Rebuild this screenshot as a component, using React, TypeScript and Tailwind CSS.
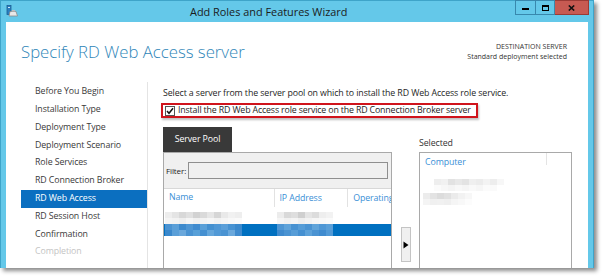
import React from "react";

const steps = [
  "Before You Begin",
  "Installation Type",
  "Deployment Type",
  "Deployment Scenario",
  "Role Services",
  "RD Connection Broker",
  "RD Web Access",
  "RD Session Host",
  "Confirmation",
  "Completion",
];

// pixelated (blurred-out) text, drawn as a grid of small cells
const Mosaic: React.FC<{ rows: string[][] }> = ({ rows }) => (
  <div className="flex flex-col">
    {rows.map((row, i) => (
      <div key={i} className="flex">
        {row.map((c, j) => (
          <div key={j} className="h-[6px] w-[7px]" style={{ backgroundColor: c }} />
        ))}
      </div>
    ))}
  </div>
);

const grayA = [
  ["#ededed", "#e4e4e4", "#d8d8d8", "#e0e0e0", "#d2d2d2", "#dadada", "#e6e6e6", "#d6d6d6", "#e9e9e9", "#f1f1f1", "#eeeeee"],
  ["#f4f4f4", "#f2f2f2", "#eeeeee", "#f5f5f5", "#f0f0f0", "#f3f3f3", "#f6f6f6", "#f2f2f2", "#f5f5f5", "#f8f8f8", "#fafafa"],
];
const grayB = [
  ["#ececec", "#d9d9d9", "#dedede", "#cfcfcf", "#e4e4e4", "#dcdcdc", "#eeeeee", "#f2f2f2"],
  ["#f5f5f5", "#f1f1f1", "#f4f4f4", "#eeeeee", "#f2f2f2", "#f6f6f6", "#f8f8f8", "#fafafa"],
];
const blueA = [
  ["#4a93d2", "#5a9fd8", "#3d8acd", "#4e96d4", "#3f8bcf", "#5aa0d8", "#4490d0", "#4f97d5", "#5b9fd9", "#4792d2", "#3a88cc"],
  ["#3a88cc", "#5a9fd8", "#6aa8dc", "#4a93d2", "#58a0d8", "#4590d1", "#64a6db", "#5199d6", "#4a93d2", "#6aa8dc", "#3f8bcf"],
];
const blueB = [
  ["#4e96d4", "#5fa3da", "#4791d1", "#559cd7", "#4a93d2", "#60a4da", "#4f97d5", "#5a9fd8"],
  ["#3e8ace", "#4a93d2", "#579dd7", "#4590d1", "#5ca1d9", "#4a93d2", "#3f8bcf", "#5199d6"],
];
const selA = [
  ["#ffffff", "#eeeeee", "#f1f1f1", "#e2e2e2", "#e8e8e8", "#e3e3e3", "#efefef", "#ececec", "#f3f3f3", "#ededed", "#f7f7f7"],
  ["#ffffff", "#fbfbfb", "#f7f7f7", "#f4f4f4", "#f8f8f8", "#f5f5f5", "#f9f9f9", "#f6f6f6", "#fbfbfb", "#fafafa", "#ffffff"],
];
const selB = [
  ["#ececec", "#e3e3e3", "#dcdcdc", "#e1e1e1", "#ebebeb", "#f2f2f2", "#f7f7f7"],
  ["#f4f4f4", "#f0f0f0", "#f1f1f1", "#efefef", "#f5f5f5", "#f8f8f8", "#fcfcfc"],
];

export default function App() {
  return (
    <div className="h-[278px] w-[605px] overflow-hidden bg-white font-['Open_Sans',sans-serif] text-[#1e1e1e]">
      <div className="flex h-[268px] w-[594px] flex-col border border-b-0 border-[#3ea4c9] bg-[#64c8e9] shadow-[3px_3px_4px_rgba(0,0,0,0.45)]">
        {/* title bar */}
        <div className="flex h-[21px] items-start">
          <svg className="ml-[5px] mt-[4px]" width="12" height="12" viewBox="0 0 12 12">
            <rect x="1" y="0.5" width="4" height="9" fill="#2a7fc0" stroke="#1c5f95" strokeWidth="0.8" />
            <rect x="2" y="2" width="2" height="1" fill="#cfe8f8" />
            <path d="M4 6.5 L10 6.5 L11.5 11 L3 11 Z" fill="#e8e8e8" stroke="#8a8a8a" strokeWidth="0.8" />
            <path d="M6 5 L9 5 L9.5 6.5 L5.5 6.5 Z" fill="#bdbdbd" />
          </svg>
          <span className="ml-[172px] mt-[4px] text-[10.9px] leading-[14px] text-[#1b1b1b]">
            Add Roles and Features Wizard
          </span>
          <div className="ml-auto mr-[4px] mt-[-1px] flex h-[15px]">
            <div className="flex w-[21px] items-center justify-center border border-[#3888ad] bg-[#64c8e9]">
              <div className="mt-[3px] h-[2px] w-[7px] bg-black" />
            </div>
            <div className="flex w-[19px] items-center justify-center border border-l-0 border-[#3888ad] bg-[#64c8e9]">
              <div className="h-[6px] w-[7px] border-[1.5px] border-t-[2.5px] border-black" />
            </div>
            <div className="flex w-[34px] items-center justify-center border border-l-0 border-[#9a3a35] bg-[#c75a52]">
              <svg width="7" height="6" viewBox="0 0 7 6">
                <path d="M0.8 0.5 L6.2 5.5 M6.2 0.5 L0.8 5.5" stroke="#111111" strokeWidth="1.6" />
              </svg>
            </div>
          </div>
        </div>

        {/* client area */}
        <div className="mx-[5px] flex flex-1 flex-col bg-white">
          {/* header */}
          <div className="flex h-[60px] items-start justify-between">
            <h1 className="pl-[15px] pt-[18px] text-[16.75px] font-light leading-[24px] text-[#2f86b8]">
              Specify RD Web Access server
            </h1>
            <div className="pr-[21px] pt-[20px] text-right text-[7px] leading-[9.5px] text-[#333333]">
              <div>DESTINATION SERVER</div>
              <div>Standard deployment selected</div>
            </div>
          </div>

          {/* body */}
          <div className="flex flex-1 text-[8.8px] tracking-[-0.1px]">
            <ul className="w-[142px] border-r border-[#e4e4e4] pt-[1px]">
              {steps.map((s) => (
                <li
                  key={s}
                  className={
                    s === "RD Web Access"
                      ? "ml-[15px] flex h-[17.8px] items-center bg-[#0b6fc0] pl-[14px] text-white"
                      : s === "Completion"
                      ? "ml-[15px] flex h-[17.8px] items-center pl-[14px] text-[#c4c4c4]"
                      : "ml-[15px] flex h-[17.8px] items-center pl-[14px] text-[#3a3a3a]"
                  }
                >
                  {s}
                </li>
              ))}
            </ul>

            <div className="flex flex-1 flex-col pl-[15px]">
              <p className="pt-[5px] leading-[12px]">
                Select a server from the server pool on which to install the RD Web Access role service.
              </p>
              <div className="ml-[-2px] mt-[4px] flex h-[15px] w-[317px] items-center gap-[3px] border-2 border-[#d0141c] pl-[2px] shadow-[1px_2px_2px_rgba(0,0,0,0.25)]">
                <div className="flex h-[10px] w-[10px] items-center justify-center border border-[#555555] bg-white">
                  <svg width="8" height="8" viewBox="0 0 8 8">
                    <path d="M1 4 L3 6.3 L7 1.2" fill="none" stroke="#111111" strokeWidth="1.5" />
                  </svg>
                </div>
                <span className="whitespace-nowrap leading-[11px] tracking-[-0.15px]">
                  Install the RD Web Access role service on the RD Connection Broker server
                </span>
              </div>

              <div className="mt-[9px] flex flex-1">
                {/* server pool */}
                <div className="flex w-[229px] flex-col">
                  <div className="flex h-[25px] w-[69px] items-center justify-center bg-[#393939] text-white">
                    Server Pool
                  </div>
                  <div className="flex flex-1 flex-col border border-b-0 border-[#a9a9a9]">
                    <div className="flex h-[36px] items-center gap-[2px] border-b border-[#d8d8d8] bg-[#f0f0f0] pl-[2px] pr-[3px]">
                      <span className="text-[8px]">Filter:</span>
                      <div className="h-[17px] flex-1 border border-[#8f8f8f] bg-[#f0f0f0]" />
                    </div>
                    <div className="flex h-[18px] items-center text-[#3a8fd6]">
                      <div className="w-[110px] pl-[5px]">Name</div>
                      <div className="h-full w-[74px] border-l border-[#e2e2e2] pl-[5px] leading-[18px]">IP Address</div>
                      <div className="h-full w-[44px] overflow-hidden whitespace-nowrap border-l border-[#e2e2e2] pl-[5px] leading-[18px]">
                        Operating
                      </div>
                    </div>
                    <div className="mt-[5px] flex h-[12px] overflow-hidden">
                      <div className="ml-[1px] w-[112px]">
                        <Mosaic rows={grayA} />
                      </div>
                      <div className="w-[60px]">
                        <Mosaic rows={grayB} />
                      </div>
                    </div>
                    <div className="flex h-[12px] overflow-hidden bg-[#0070c0]">
                      <div className="ml-[1px] w-[112px]">
                        <Mosaic rows={blueA} />
                      </div>
                      <div className="w-[60px]">
                        <Mosaic rows={blueB} />
                      </div>
                    </div>
                  </div>
                </div>

                {/* add arrow */}
                <div className="ml-[9px] mt-[100px] flex h-[35px] w-[10px] items-center justify-center border border-[#c4c4c4] bg-[#f0f0f0]">
                  <svg width="6" height="8" viewBox="0 0 6 8">
                    <path d="M0.5 0.5 L5.5 4 L0.5 7.5 Z" fill="#000000" />
                  </svg>
                </div>

                {/* selected */}
                <div className="ml-[8px] flex flex-col pt-[10px]">
                  <span className="h-[12px] leading-[12px] text-[#333333]">Selected</span>
                  <div className="mt-[3px] flex w-[153px] flex-1 flex-col border border-b-0 border-[#a9a9a9]">
                    <div className="flex h-[18px]">
                      <span className="w-[126px] pl-[5px] leading-[18px] text-[#3a8fd6]">Computer</span>
                      <div className="h-[12px] border-l border-[#e4e4e4]" />
                    </div>
                    <div className="ml-[7px] mt-[8px]">
                      <Mosaic rows={selA} />
                    </div>
                    <div className="ml-[3px] mt-[2px]">
                      <Mosaic rows={selB} />
                    </div>
                  </div>
                </div>
              </div>
            </div>
          </div>
        </div>
      </div>
    </div>
  );
}
